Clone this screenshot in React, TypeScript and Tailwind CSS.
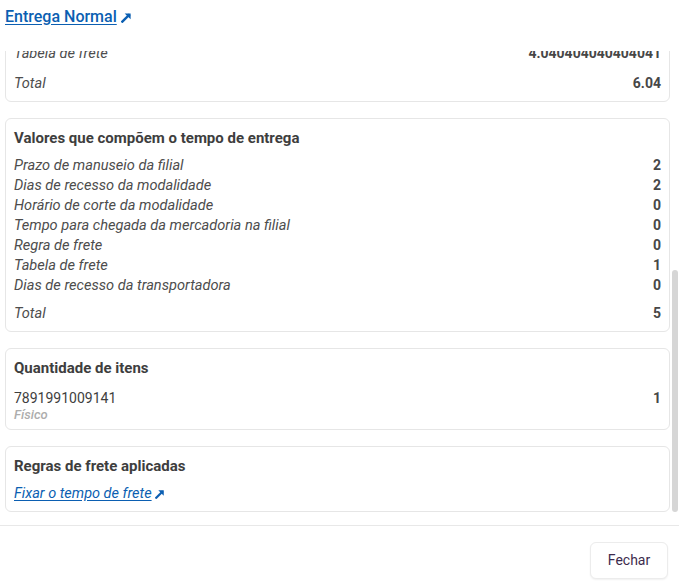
import React from 'react';

type Row = { label: string; value: string };

const ArrowIcon: React.FC<{ className?: string }> = ({ className }) => (
  <svg viewBox="0 0 12 12" className={className} fill="none" stroke="currentColor" strokeWidth={2.6}>
    <path d="M1.5 10.5 L8.5 3.5" strokeLinecap="square" />
    <path d="M4 1.5 H10.5 V8 Z" fill="currentColor" stroke="none" />
  </svg>
);

// Card with a bold title and label/value rows plus a total
const SummaryCard: React.FC<{ title: string; rows: Row[]; total: string; totalGap?: string }> = ({
  title,
  rows,
  total,
  totalGap = 'mt-[8px]',
}) => (
  <section className="rounded-[6px] border border-[#e6e6e6] bg-white px-[8px] pt-[8px] pb-[8px]">
    <h3 className="text-[15px] leading-[22px] font-bold text-[#3e3e3e] mb-[6px]">{title}</h3>
    <div className="flex flex-col">
      {rows.map((r) => (
        <div key={r.label} className="flex justify-between items-center h-[20px] leading-[20px]">
          <span className="italic text-[14.6px] text-[#4d4d4d]">{r.label}</span>
          <span className="font-bold text-[14px] text-[#474747]">{r.value}</span>
        </div>
      ))}
    </div>
    <div className={`flex justify-between items-center h-[20px] leading-[20px] ${totalGap}`}>
      <span className="italic text-[14.6px] text-[#4d4d4d]">Total</span>
      <span className="font-bold text-[14px] text-[#474747]">{total}</span>
    </div>
  </section>
);

const freightRows: Row[] = [
  { label: 'Regra de frete', value: '2' },
  { label: 'Tabela de frete', value: '4.040404040404041' },
];

const deliveryRows: Row[] = [
  { label: 'Prazo de manuseio da filial', value: '2' },
  { label: 'Dias de recesso da modalidade', value: '2' },
  { label: 'Horário de corte da modalidade', value: '0' },
  { label: 'Tempo para chegada da mercadoria na filial', value: '0' },
  { label: 'Regra de frete', value: '0' },
  { label: 'Tabela de frete', value: '1' },
  { label: 'Dias de recesso da transportadora', value: '0' },
];

export default function App() {
  return (
    <div
      className="w-[679px] h-[588px] flex flex-col bg-white text-[#444]"
      style={{ fontFamily: 'Roboto, "Noto Sans", sans-serif' }}
    >
      <header className="h-[51px] shrink-0 flex items-start px-[5px] pt-[7px]">
        <a href="#" className="flex items-center gap-[4px] text-[16px] leading-[20px] font-medium text-[#0b5fb2]">
          <span className="underline underline-offset-2">Entrega Normal</span>
          <ArrowIcon className="w-[11px] h-[11px]" />
        </a>
      </header>

      <div className="relative h-[465px] shrink-0 overflow-hidden">
        <div className="h-full flex flex-col justify-end gap-[16px] px-[5px] pr-[9px] pb-[4px]">
          <SummaryCard title="Valores que compõem o valor do frete" rows={freightRows} total="6.04" totalGap="mt-[10px]" />
          <SummaryCard title="Valores que compõem o tempo de entrega" rows={deliveryRows} total="5" />

          <section className="rounded-[6px] border border-[#e6e6e6] bg-white px-[8px] pt-[8px] pb-[8px]">
            <h3 className="text-[15px] leading-[22px] font-bold text-[#3e3e3e] mb-[9px]">Quantidade de itens</h3>
            <div className="flex justify-between items-start">
              <div className="flex flex-col">
                <span className="text-[14px] leading-[20px] text-[#3e3e3e]">7891991009141</span>
                <span className="text-[13px] leading-[13px] italic font-medium text-[#adadad]">Físico</span>
              </div>
              <span className="font-bold text-[14px] leading-[20px] text-[#474747]">1</span>
            </div>
          </section>

          <section className="rounded-[6px] border border-[#e6e6e6] bg-white px-[8px] pt-[8px] pb-[7px]">
            <h3 className="text-[15px] leading-[22px] font-bold text-[#3e3e3e] mb-[7px]">Regras de frete aplicadas</h3>
            <a href="#" className="flex w-fit items-center gap-[3px] text-[14.5px] leading-[20px] italic text-[#0b5fb2]">
              <span className="underline underline-offset-2">Fixar o tempo de frete</span>
              <ArrowIcon className="w-[10px] h-[10px]" />
            </a>
          </section>
        </div>
        <div className="absolute right-[1px] bottom-[4px] w-[6px] h-[242px] rounded-[3px] bg-[#d6d6d6]" />
      </div>

      <footer className="mt-[9px] border-t border-[#e8e8e8] flex justify-end pt-[16px] pr-[11px]">
        <button className="w-[78px] h-[37px] rounded-[6px] border border-[#ececec] bg-white text-[14px] text-[#3d2b4d] shadow-[0_1px_2px_rgba(0,0,0,0.06)]">
          Fechar
        </button>
      </footer>
    </div>
  );
}
